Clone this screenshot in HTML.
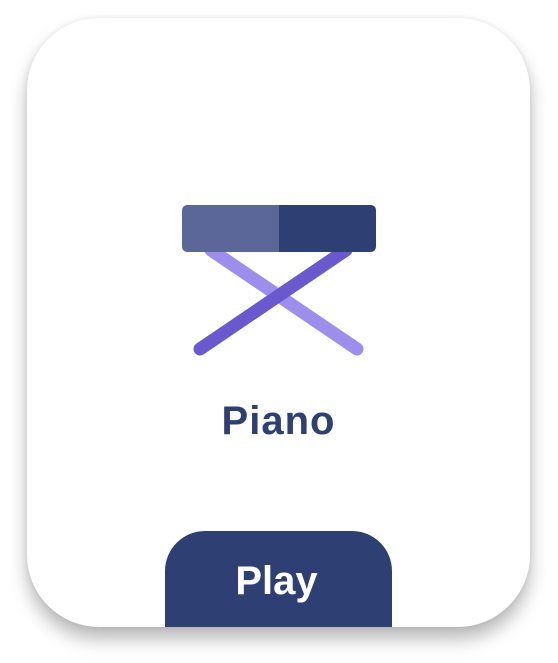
<!DOCTYPE html>
<html><head><style>
html,body{margin:0;padding:0;background:#fff;width:558px;height:663px;overflow:hidden}
.card{position:absolute;left:27px;top:18px;width:503px;height:609px;background:#fff;border-radius:72px;box-shadow:0 12px 18px rgba(0,0,0,0.28),0 0 6px rgba(0,0,0,0.08);overflow:hidden}
.t{position:absolute;left:0;width:503px;text-align:center;font-family:"Liberation Sans",sans-serif;font-weight:bold}
.btn{position:absolute;left:138px;top:513px;width:227px;height:100px;background:#2e3f73;border-radius:40px 40px 0 0}
</style></head><body>
<div class="card">
<svg style="position:absolute;left:0;top:0" width="503" height="609">
<g transform="translate(-27,-18)">
<line x1="211" y1="250" x2="357" y2="349" stroke="#9d8ded" stroke-width="13" stroke-linecap="round"/>
<line x1="346" y1="250" x2="200" y2="349" stroke="#6a58cf" stroke-width="13" stroke-linecap="round"/>
<path d="M188 205H279V252H188Q182 252 182 246V211Q182 205 188 205Z" fill="#5b6799"/>
<path d="M279 205H370Q376 205 376 211V246Q376 252 370 252H279Z" fill="#2e3f73"/>
</g>
</svg>
<div class="t" style="top:381px;font-size:40px;color:#2e3f73;letter-spacing:1px">Piano</div>
<div class="btn"></div>
<div class="t" style="top:541px;font-size:40px;color:#fff;left:-2px">Play</div>
</div>
</body></html>
